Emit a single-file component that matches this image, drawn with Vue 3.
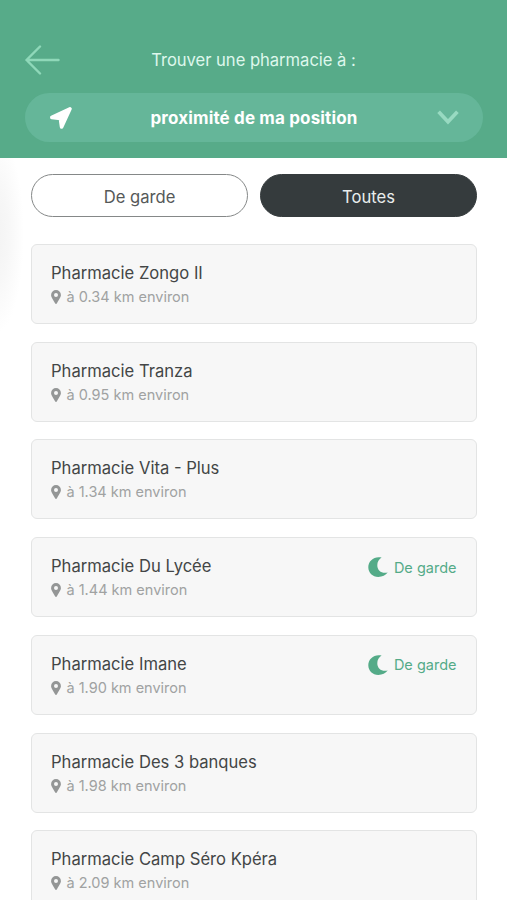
<script setup>
const pharmacies = [
  { name: 'Pharmacie Zongo II', distance: '0.34' },
  { name: 'Pharmacie Tranza', distance: '0.95' },
  { name: 'Pharmacie Vita - Plus', distance: '1.34' },
  { name: 'Pharmacie Du Lycée', distance: '1.44', onDuty: true },
  { name: 'Pharmacie Imane', distance: '1.90', onDuty: true },
  { name: 'Pharmacie Des 3 banques', distance: '1.98' },
  { name: 'Pharmacie Camp Séro Kpéra', distance: '2.09' },
]
</script>

<template>
  <div class="screen">
    <header class="header">
      <div class="title-row">
        <svg class="back" viewBox="0 0 36 32" fill="none" stroke="#8fd8b9" stroke-width="2.4" stroke-linecap="round" stroke-linejoin="round">
          <path d="M15 2.500 1.500 16 15 29.500M1.500 16h32" />
        </svg>
        <h1 class="title">Trouver une pharmacie à :</h1>
        <span></span>
      </div>
      <button class="picker">
        <svg class="arrow" viewBox="0 0 24 24" fill="#fff" stroke="#fff" stroke-width="3.6" stroke-linejoin="round">
          <path d="M21 2.800 2.800 11.400 11.400 12.400 12.600 21Z" />
        </svg>
        <span class="place">proximité de ma position</span>
        <svg class="chevron" viewBox="0 0 22 16" fill="none" stroke="#98dac1" stroke-width="3.7">
          <path d="m1.600 1.800 9.400 9.900 9.400-9.900" />
        </svg>
      </button>
    </header>

    <main class="content">
      <div class="tabs">
        <button class="tab">De garde</button>
        <button class="tab active">Toutes</button>
      </div>
      <ul class="list">
        <li v-for="p in pharmacies" :key="p.name" class="card">
          <div>
            <h2 class="name">{{ p.name }}</h2>
            <p class="distance">
              <svg class="pin" viewBox="0 0 10 14" fill="#949696">
                <path fill-rule="evenodd" d="M5 0a4.900 4.900 0 0 0-4.900 4.900c0 1.900.8 2.900 4.100 8.500a.9.9 0 0 0 1.600 0c3.300-5.600 4.100-6.600 4.100-8.500A4.900 4.900 0 0 0 5 0Zm0 3a2 2 0 1 1 0 4 2 2 0 0 1 0-4Z" />
              </svg>
              <span>à {{ p.distance }} km environ</span>
            </p>
          </div>
          <div v-if="p.onDuty" class="duty">
            <svg class="moon" viewBox="0 0 20 20" fill="#54ab88">
              <path d="M13.600.6C6.500-1.200.3 3.700.3 10.200c0 5.500 4.400 9.700 10 9.700 4 0 7.400-1.600 9.400-4.400C14 17 9.300 13.800 9.300 8.300 9.300 4.900 10.900 2.200 13.600.6Z" />
            </svg>
            <span>De garde</span>
          </div>
        </li>
      </ul>
    </main>
  </div>
</template>

<style>
body {
  background: #fff;
  overflow: hidden;
}
</style>

<style scoped>
.screen {
  box-sizing: border-box;
  width: 507px;
  height: 900px;
  overflow: hidden;
  background: #fff;
  font-family: Inter, "Liberation Sans", sans-serif;
}

.header {
  box-sizing: border-box;
  height: 158px;
  padding: 40px 25px 0;
  background: #57ab89;
}

.title-row {
  display: grid;
  grid-template-columns: 36px 1fr 36px;
  align-items: center;
  height: 40px;
}

.back {
  display: block;
  width: 36px;
  height: 32px;
}

.title {
  margin: 0;
  text-align: center;
  color: #def7ec;
  font-size: 16.600px;
  letter-spacing: -0.030px;
  font-weight: 400;
  line-height: 22px;
}

button {
  font-family: inherit;
  cursor: pointer;
}

.picker {
  box-sizing: border-box;
  display: grid;
  grid-template-columns: 24px 1fr 22px;
  align-items: center;
  width: 458px;
  height: 49px;
  margin-top: 13px;
  padding: 0 24px;
  border: 0;
  border-radius: 25px;
  background: #65b699;
}

.arrow {
  display: block;
  width: 24px;
  height: 24px;
}

.place {
  color: #fff;
  font-size: 17px;
  letter-spacing: 0.150px;
  font-weight: 700;
  line-height: 22px;
  transform: translateX(-1px);
}

.chevron {
  display: block;
  width: 22px;
  height: 16px;
}

.content {
  padding: 16px 30px 0 31px;
  height: 742px;
  box-sizing: border-box;
  background: radial-gradient(ellipse 28px 100px at -4px 76px, #f3f3f3 0%, #f7f7f7 45%, #fff 100%);
}

.tabs {
  display: grid;
  grid-template-columns: 217px 217px;
  gap: 12px;
}

.tab {
  height: 43px;
  padding: 2px 0 0;
  border: 1px solid #858888;
  border-radius: 22px;
  background: #fff;
  color: #565959;
  font-size: 16.600px;
}

.tab.active {
  border-color: #353b3d;
  background: #353b3d;
  color: #e9eded;
}

.list {
  display: flex;
  flex-direction: column;
  gap: 17.750px;
  margin: 26.750px 0 0;
  padding: 0;
  list-style: none;
}

.card {
  box-sizing: border-box;
  display: flex;
  justify-content: space-between;
  flex: none;
  height: 80px;
  padding: 17px 19.500px 0 19px;
  border: 1px solid #e3e4e4;
  border-radius: 6px;
  background: #f7f7f7;
}

.name {
  margin: 0;
  color: #434646;
  font-size: 16.600px;
  font-weight: 400;
  line-height: 22px;
}

.distance {
  display: flex;
  align-items: center;
  gap: 6px;
  margin: 3px 0 0 -0.500px;
  color: #a0a2a2;
  font-size: 14.500px;
  line-height: 20px;
}

.pin {
  width: 10px;
  height: 14px;
}

.duty {
  display: flex;
  align-items: center;
  gap: 6px;
  height: 24px;
  color: #54ab88;
  font-size: 14.500px;
}

.moon {
  width: 20px;
  height: 20px;
}
</style>
